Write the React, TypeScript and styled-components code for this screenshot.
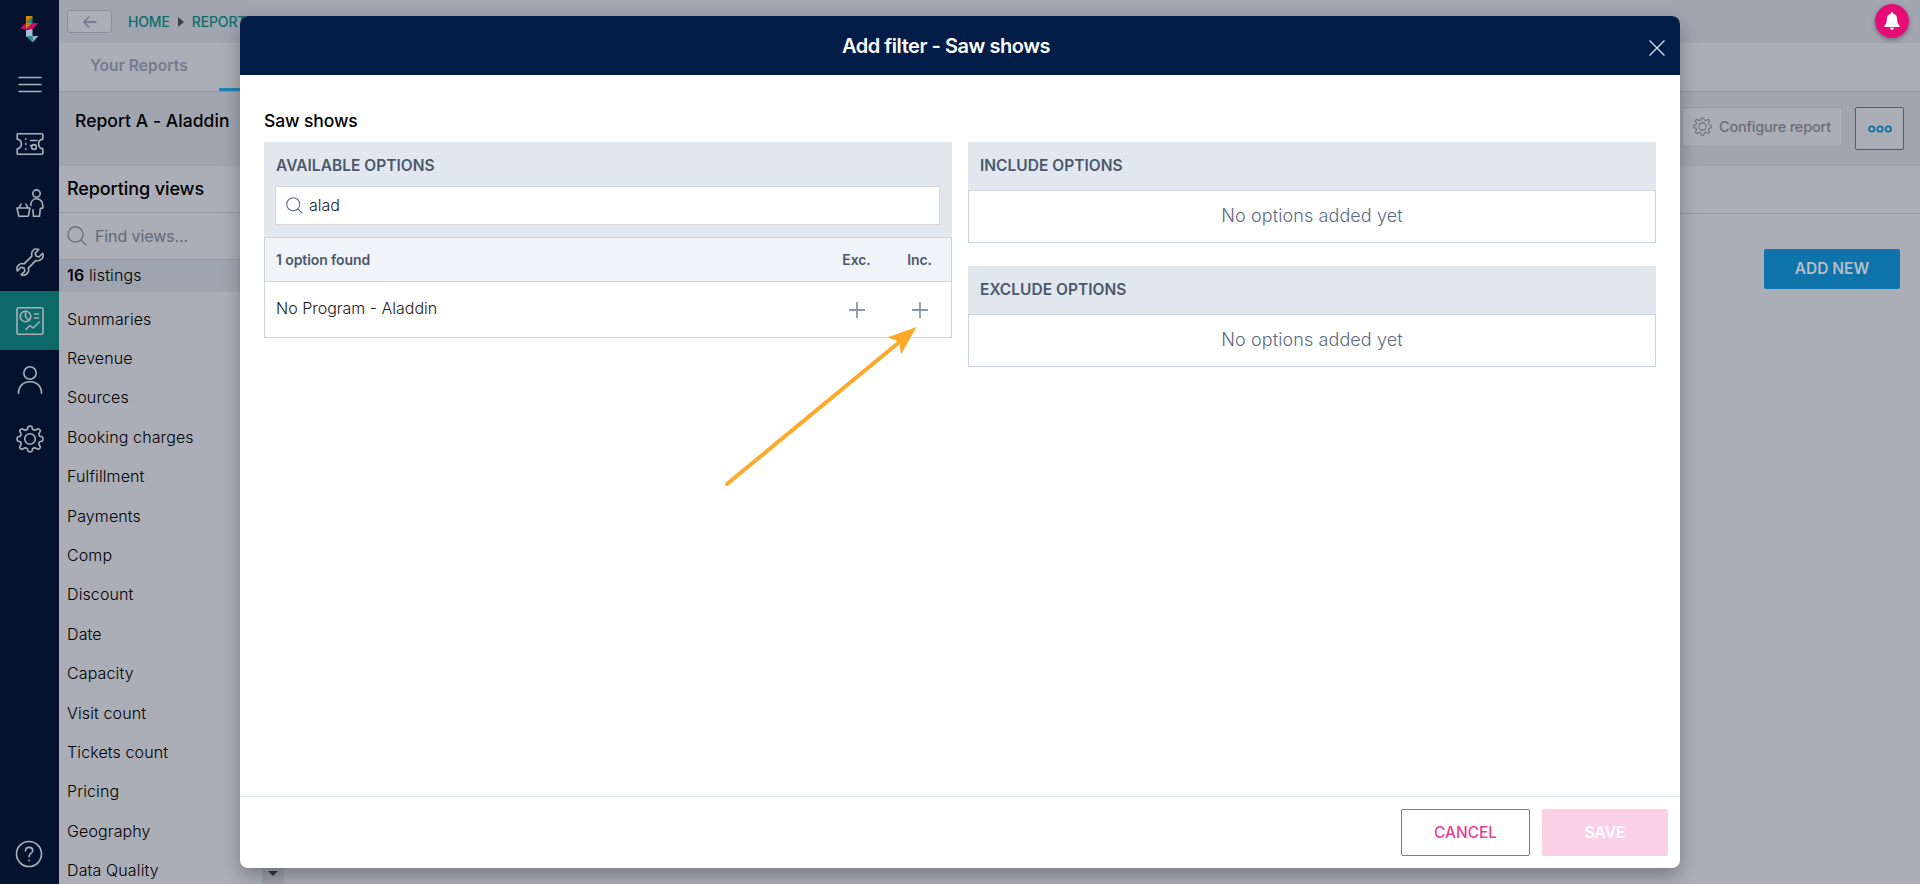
import type { ReactNode } from 'react';
import styled, { createGlobalStyle } from 'styled-components';

const views = [
  'Summaries',
  'Revenue',
  'Sources',
  'Booking charges',
  'Fulfillment',
  'Payments',
  'Comp',
  'Discount',
  'Date',
  'Capacity',
  'Visit count',
  'Tickets count',
  'Pricing',
  'Geography',
  'Data Quality',
];

const GEAR =
  'M12.1 1.6Q14 .4 15.9 1.6L16.6 4.2Q17.8 5.5 19.6 5L22.1 3.7Q24 4 24.4 5.9L23 8.5Q22.6 10.2 23.9 11.3L26.4 12.1Q27.6 14 26.4 15.9L23.9 16.7Q22.6 17.8 23 19.5L24.4 22.1Q24 24 22.1 24.4L19.6 23Q17.8 22.5 16.6 23.8L15.9 26.4Q14 27.6 12.1 26.4L11.4 23.8Q10.2 22.5 8.4 23L5.9 24.4Q4 24 3.6 22.1L5 19.5Q5.4 17.8 4.1 16.7L1.6 15.9Q.4 14 1.6 12.1L4.1 11.3Q5.4 10.2 5 8.5L3.6 5.9Q4 4 5.9 3.7L8.4 5Q10.2 5.5 11.4 4.2z';

const Icon = ({ size = 28, children }: { size?: number; children: ReactNode }) => (
  <svg
    width={size}
    height={size}
    viewBox="0 0 28 28"
    fill="none"
    stroke="currentColor"
    strokeWidth="1.6"
    strokeLinecap="round"
    strokeLinejoin="round"
  >
    {children}
  </svg>
);

const GearIcon = ({ size }: { size?: number }) => (
  <Icon size={size}>
    <path d={GEAR} />
    <circle cx="14" cy="14" r="5.3" />
  </Icon>
);

const SearchIcon = ({ size }: { size: number }) => (
  <svg width={size} height={size} viewBox="0 0 20 20" fill="none" stroke="currentColor" strokeWidth="1.2">
    <circle cx="8.5" cy="8.5" r="7.6" />
    <path d="M13.9 13.9l5.4 5.4" />
  </svg>
);

const PlusIcon = () => (
  <svg width="16" height="16" viewBox="0 0 16 16">
    <path d="M8 0v16M0 8h16" stroke="#8d96ab" strokeWidth="1.8" />
  </svg>
);

const Logo = () => (
  <svg width="19" height="27" viewBox="0 0 19 27">
    <path d="M6 0h6.5L6 6z" fill="#cf8a10" />
    <path d="M6 6l6.5-6v1.5L7 7H6z" fill="#b3921c" />
    <path d="M12.5 1.5V7H7z" fill="#1c8f82" />
    <path d="M0 12l6-5v7z" fill="#c40c6a" />
    <path d="M6 7h12.5l-6 6H6z" fill="#c40c6a" />
    <path d="M6 7h6L6 13z" fill="#cf8210" />
    <path d="M6 14l6.5-1v8H6z" fill="#a6bfd4" />
    <path d="M6 20h6.5v6.5z" fill="#1c9486" />
    <path d="M12.5 20h6l-6 6.500z" fill="#8fb5c8" />
  </svg>
);

const App = () => {
  return (
    <>
      <GlobalStyle />
      <Page>
        <Sidebar>
          <LogoTile>
            <Logo />
          </LogoTile>
          <NavTile>
            <Icon>
              <path d="M3 6.5h22M3 13.5h22M3 20.5h22" />
            </Icon>
          </NavTile>
          <NavTile>
            <Icon>
              <path d="M2.2 3.8h23.6c.6 0 1 .4 1 1v4.3c-5.6 1-5.6 8.8 0 9.8v4.3c0 .6-.4 1-1 1H2.2c-.6 0-1-.4-1-1v-4.3c5.6-1 5.6-8.8 0-9.800V4.800c0-.6.4-1 1-1z" />
              <path d="M9.800 8.700v.5M9.800 13.500v1M9.800 18.800v.5M14.500 10.500h6.500M14.500 15.500h.5" />
              <circle cx="18" cy="17" r="2.4" />
            </Icon>
          </NavTile>
          <NavTile>
            <Icon>
              <circle cx="20.5" cy="4.6" r="3.7" />
              <path d="M14.8 16.5c0-4 2.2-6.7 5.7-6.7s6.3 2.7 6.3 6.700v2.800h-2.500l-.8 8h-6l-.6-6.500" />
              <path d="M1 19h13l-1.600 7.500c-.1.500-.5.800-1 .8H3.600c-.5 0-.9-.3-1-.8zM5 15l-2 4M10 15l2 4" />
            </Icon>
          </NavTile>
          <NavTile>
            <Icon>
              <path d="M18 1.300c2-.6 3.600-.4 4.800.2l-3.600 3.600.8 3 3 .8 3.700-3.700c.8 2 .3 4.500-1.200 6-1.500 1.400-3.600 1.800-5.500 1.200l-7.700 7.700c.7 2 .3 4-1.200 5.500-1.500 1.500-4 2-5.900 1.200l3.700-3.700-.8-3-3-.8-3.700 3.700c-.8-2-.3-4.400 1.200-5.900 1.500-1.500 3.600-1.900 5.500-1.200l7.800-7.800c-.6-2.600.1-5.500 2.100-6.800z" />
            </Icon>
          </NavTile>
          <NavTile $active>
            <Icon>
              <rect x="1" y="0.8" width="26" height="26.4" rx="1.5" />
              <circle cx="9.5" cy="9.5" r="5.3" />
              <path d="M9.5 4.200v5.300l3.600 4M18.500 7h4M18.500 11h4M10 22.500l4-4 3 2.500 6.500-6" />
            </Icon>
          </NavTile>
          <NavTile>
            <Icon>
              <circle cx="14" cy="7" r="6.2" />
              <path d="M2.500 27.200c0-7 4.800-11.400 11.500-11.400s11.500 4.400 11.500 11.400" />
            </Icon>
          </NavTile>
          <NavTile>
            <GearIcon />
          </NavTile>
          <HelpTile>
            <Icon>
              <circle cx="14" cy="14" r="12.5" />
              <path d="M10.500 11c0-2.200 1.500-3.600 3.600-3.600s3.600 1.300 3.600 3.300c0 2.500-3.600 2.700-3.600 5.300v.8M14.100 20.300v.4" />
            </Icon>
          </HelpTile>
        </Sidebar>

        <Main>
          <TopBar>
            <BackButton>
              <svg width="14" height="12" viewBox="0 0 14 12" fill="none" stroke="currentColor" strokeWidth="1.3">
                <path d="M6 .7L.9 6 6 11.300M.9 6H13.500" />
              </svg>
            </BackButton>
            <Crumb>HOME</Crumb>
            <CrumbArrow />
            <Crumb>REPORTS</Crumb>
          </TopBar>
          <Tabs>
            <Tab>Your Reports</Tab>
            <ActiveTab />
          </Tabs>
          <ReportBar>
            <ReportName>Report A - Aladdin</ReportName>
            <ConfigureButton>
              <GearIcon size={19} />
              Configure report
            </ConfigureButton>
            <MoreButton>
              <svg width="24" height="8" viewBox="0 0 24 8" fill="none" stroke="currentColor" strokeWidth="1.8">
                <circle cx="3.7" cy="4" r="2.7" />
                <circle cx="12" cy="4" r="2.7" />
                <circle cx="20.3" cy="4" r="2.7" />
              </svg>
            </MoreButton>
          </ReportBar>
          <Columns>
            <ViewsPanel>
              <ViewsTitle>Reporting views</ViewsTitle>
              <FindViews>
                <SearchIcon size={20} />
                Find views...
              </FindViews>
              <Listings>
                <b>16</b> listings
              </Listings>
              <ViewList>
                {views.map((view) => (
                  <ViewItem key={view}>{view}</ViewItem>
                ))}
              </ViewList>
              <ScrollButton>
                <svg width="10" height="5" viewBox="0 0 10 5">
                  <path d="M0 0h10L5 5z" fill="#30343c" />
                </svg>
              </ScrollButton>
            </ViewsPanel>
            <Content>
              <ContentHead />
              <AddNew>ADD NEW</AddNew>
            </Content>
          </Columns>
        </Main>
      </Page>

      <Modal>
        <ModalHeader>
          <ModalTitle>Add filter - Saw shows</ModalTitle>
          <CloseButton>
            <svg width="16" height="16" viewBox="0 0 16 16" stroke="#e3e7ee" strokeWidth="1.2">
              <path d="M.5.5l15 15M15.5.5l-15 15" />
            </svg>
          </CloseButton>
        </ModalHeader>
        <ModalBody>
          <SectionTitle>Saw shows</SectionTitle>
          <Panels>
            <div>
              <AvailableHead>
                <PanelTitle>AVAILABLE OPTIONS</PanelTitle>
                <SearchBox>
                  <SearchIcon size={17} />
                  alad
                </SearchBox>
              </AvailableHead>
              <ResultHead>
                <span>1 option found</span>
                <Cell>Exc.</Cell>
                <Cell>Inc.</Cell>
              </ResultHead>
              <ResultRow>
                <ResultName>No Program - Aladdin</ResultName>
                <Cell>
                  <PlusIcon />
                </Cell>
                <Cell>
                  <PlusIcon />
                </Cell>
              </ResultRow>
            </div>
            <SelectedPanels>
              {['INCLUDE OPTIONS', 'EXCLUDE OPTIONS'].map((title) => (
                <div key={title}>
                  <SelectedHead>
                    <PanelTitle>{title}</PanelTitle>
                  </SelectedHead>
                  <EmptyBox>No options added yet</EmptyBox>
                </div>
              ))}
            </SelectedPanels>
          </Panels>
        </ModalBody>
        <ModalFooter>
          <CancelButton>CANCEL</CancelButton>
          <SaveButton>SAVE</SaveButton>
        </ModalFooter>
      </Modal>

      <Arrow width="200" height="170" viewBox="0 0 200 170">
        <path d="M7 164L180 21.500" stroke="#fda929" strokeWidth="4" strokeLinecap="round" />
        <path d="M196.500 7l-15.500 27.500-1.500-10.500-3.500-3.500L167 17.500z" fill="#fda929" />
      </Arrow>

      <Bell>
        <svg width="16" height="18" viewBox="0 0 16 18" fill="#fff">
          <path d="M8 0c.7 0 1.200.5 1.200 1.200v.5c2.500.6 4 2.600 4 5.300 0 4 1 5.400 2.300 6.500.5.500.2 1.500-.6 1.500H1.100c-.8 0-1.100-1-.6-1.500C1.800 12.400 2.800 11 2.800 7c0-2.700 1.500-4.700 4-5.300v-.5C6.800.5 7.300 0 8 0zM6 15.700h4a2 2 0 0 1-4 0z" />
        </svg>
      </Bell>
    </>
  );
};
export default App;

const GlobalStyle = createGlobalStyle`
  * {
    box-sizing: border-box;
  }
  body {
    margin: 0;
    overflow: hidden;
    font-family: Inter, 'Liberation Sans', sans-serif;
    font-size: 16px;
    background: #abaeb6;
  }
  button {
    font-family: inherit;
    padding: 0;
  }
  svg {
    display: block;
    flex: none;
  }
`;

const Page = styled.div`
  display: flex;
  height: 884px;
  overflow: hidden;
`;

const Sidebar = styled.nav`
  display: flex;
  flex-direction: column;
  width: 59px;
  flex: none;
  background: #04122e;
  color: #abb0bb;
`;

const NavTile = styled.div<{ $active?: boolean }>`
  display: flex;
  align-items: center;
  justify-content: center;
  height: 59px;
  background: ${({ $active }) => ($active ? '#0d6868' : 'transparent')};
`;

const LogoTile = styled(NavTile)`
  height: 55px;
  padding-top: 4px;
`;

const HelpTile = styled(NavTile)`
  margin: auto 0 1px;
  padding-right: 1px;
`;

const Main = styled.div`
  display: flex;
  flex-direction: column;
  flex: 1;
`;

const TopBar = styled.div`
  display: flex;
  flex: none;
  align-items: center;
  height: 43px;
  padding-left: 8px;
  background: #a1a5b0;
`;

const BackButton = styled.button`
  display: flex;
  align-items: center;
  justify-content: center;
  width: 45px;
  height: 23px;
  margin-right: 16px;
  background: #abaeb6;
  border: 1px solid #8890a0;
  border-radius: 3px;
  color: #6a7385;
`;

const Crumb = styled.span`
  font-size: 14px;
  font-weight: 500;
  letter-spacing: -0.15px;
  color: #0f6d69;
`;

const CrumbArrow = styled.span`
  margin: 0 8px;
  border: 5px solid transparent;
  border-left: 6px solid #39414f;
  border-right: 0;
`;

const Tabs = styled.div`
  display: flex;
  flex: none;
  height: 49px;
  border-bottom: 1px solid #8f96a5;
`;

const Tab = styled.div`
  width: 160px;
  padding: 13px 0 0 31px;
  font-weight: 600;
  font-size: 15.5px;
  letter-spacing: 0.07px;
  color: #727b8e;
`;

const ActiveTab = styled.div`
  width: 180px;
  border-bottom: 3px solid #2283b4;
`;

const ReportBar = styled.div`
  display: flex;
  flex: none;
  align-items: flex-start;
  height: 74px;
  padding: 15px 16px 0 16px;
  background: #a0a5b0;
`;

const ReportName = styled.h1`
  margin: 3px auto 0 0;
  font-size: 17.5px;
  line-height: 22px;
  font-weight: 500;
  letter-spacing: 0.05px;
  color: #000;
`;

const ConfigureButton = styled.button`
  display: flex;
  align-items: center;
  gap: 7px;
  width: 161px;
  height: 40px;
  margin-right: 12px;
  padding: 0 0 1px 10px;
  background: #abaeb6;
  border: 1px solid #999ca7;
  border-radius: 3px;
  font-size: 14.5px;
  font-weight: 500;
  letter-spacing: -0.2px;
  white-space: nowrap;
  color: #686d78;
`;

const MoreButton = styled.button`
  display: flex;
  align-items: center;
  justify-content: center;
  width: 49px;
  height: 43px;
  background: #abaeb6;
  border: 1px solid #0f74a9;
  border-radius: 2px;
  color: #0f74a9;
`;

const Columns = styled.div`
  display: flex;
  flex: 1;
  min-height: 0;
`;

const ViewsPanel = styled.div`
  position: relative;
  width: 226px;
  overflow: hidden;
  background: #abaeb6;
`;

const ViewsTitle = styled.h2`
  height: 47px;
  margin: 0;
  padding: 12px 8px;
  border-bottom: 1px solid #9198a7;
  font-size: 18px;
  line-height: 22px;
  font-weight: 500;
  letter-spacing: -0.1px;
`;

const FindViews = styled.div`
  display: flex;
  align-items: center;
  gap: 8px;
  height: 47px;
  padding: 0 0 1px 8px;
  border-bottom: 1px solid #9198a7;
  letter-spacing: -0.1px;
  color: #5f6879;
`;

const Listings = styled.div`
  height: 32px;
  padding-left: 8px;
  line-height: 31px;
  background: #9fa5b0;
  letter-spacing: 0.15px;
  font-weight: 300;

  b {
    font-weight: 600;
  }
`;

const ViewList = styled.ul`
  margin: 0;
  padding: 7.600px 0 0 8px;
  list-style: none;
`;

const ViewItem = styled.li`
  height: 39.4px;
  line-height: 39.4px;
  font-weight: 300;
  letter-spacing: 0.12px;
  color: #000;
`;

/* lower end of the list scrollbar */
const ScrollButton = styled.div`
  position: absolute;
  right: 1px;
  bottom: 0;
  display: flex;
  justify-content: center;
  width: 22px;
  height: 20px;
  padding-top: 7px;
  background: #a0a1a7;
`;

const Content = styled.div`
  display: flex;
  flex-direction: column;
  flex: 1;
`;

const ContentHead = styled.div`
  height: 48px;
  border-bottom: 1px solid #9198a7;
`;

const AddNew = styled.button`
  align-self: flex-end;
  width: 136px;
  height: 40px;
  margin: 35px 20px 0 0;
  padding-bottom: 1px;
  border: 0;
  border-radius: 2px;
  background: #0f74a9;
  color: #b6bdc8;
  font-size: 15.5px;
  font-weight: 600;
`;

const Modal = styled.div`
  position: absolute;
  top: 16px;
  left: 240px;
  display: flex;
  flex-direction: column;
  width: 1440px;
  height: 852px;
  overflow: hidden;
  border-radius: 8px;
  background: #fff;
  box-shadow: 0 8px 18px rgba(0, 0, 0, 0.28);
`;

const ModalHeader = styled.div`
  display: grid;
  grid-template-columns: 1fr 47px;
  align-items: center;
  height: 59px;
  background: #041c48;
`;

const ModalTitle = styled.h2`
  margin: 0;
  padding-left: 19px;
  text-align: center;
  font-size: 20px;
  font-weight: 600;
  letter-spacing: -0.45px;
  color: #fff;
`;

const CloseButton = styled.button`
  margin-top: 5px;
  padding-left: 16px;
  border: 0;
  background: none;
`;

const ModalBody = styled.div`
  flex: 1;
  padding: 35px 24px;
`;

const SectionTitle = styled.h3`
  margin: 0 0 10px;
  font-size: 17.5px;
  line-height: 22px;
  font-weight: 500;
  letter-spacing: -0.1px;
`;

const Panels = styled.div`
  display: grid;
  grid-template-columns: 1fr 1fr;
  gap: 16px;
`;

const AvailableHead = styled.div`
  height: 95px;
  padding: 12px 12px 12px 11px;
  background: #e1e7ef;
`;

const PanelTitle = styled.div`
  padding-left: 1px;
  font-size: 15.5px;
  line-height: 24px;
  font-weight: 600;
  letter-spacing: 0.02px;
  color: #4b586c;
`;

const SearchBox = styled.div`
  display: flex;
  align-items: center;
  gap: 6px;
  height: 39px;
  margin-top: 8px;
  padding: 0 0 1px 10px;
  border: 1px solid #d5d7da;
  background: #fff;
  font-weight: 300;
  color: #191c20;

  svg {
    color: #55617a;
  }
`;

const ResultHead = styled.div`
  display: grid;
  grid-template-columns: 1fr 63px 63px;
  align-items: center;
  height: 44px;
  padding: 0 0 0 11px;
  border: 1px solid #cad3e2;
  border-bottom: 0;
  background: #f0f4f9;
  font-size: 14px;
  font-weight: 600;
  letter-spacing: -0.1px;
  color: #4b586c;
`;

const ResultRow = styled(ResultHead)`
  height: 57px;
  border-bottom: 1px solid #cad3e2;
  background: #fff;
  font-size: 16px;
  font-weight: 300;
  letter-spacing: 0;
  color: #191c20;
`;

const ResultName = styled.span`
  padding-bottom: 3px;
`;

const Cell = styled.div`
  display: flex;
  justify-content: center;
`;

const SelectedPanels = styled.div`
  display: flex;
  flex-direction: column;
  gap: 23px;
`;

const SelectedHead = styled.div`
  height: 48px;
  padding: 12px 11px;
  background: #e1e7ef;
`;

const EmptyBox = styled.div`
  height: 53px;
  border: 1px solid #cad3e2;
  line-height: 50px;
  text-align: center;
  font-size: 18px;
  font-weight: 300;
  letter-spacing: 0.1px;
  color: #5c6a85;
`;

const ModalFooter = styled.div`
  display: flex;
  justify-content: flex-end;
  gap: 12px;
  height: 72px;
  padding: 12px 12px 0;
  border-top: 1px solid #e2e7ef;
`;

const CancelButton = styled.button`
  width: 129px;
  height: 47px;
  border: 1px solid #ea3f94;
  border-radius: 2px;
  background: #fff;
  color: #ea3f94;
  font-size: 15.5px;
  font-weight: 500;
`;

const SaveButton = styled(CancelButton)`
  width: 126px;
  border-color: #fad0e6;
  background: #fad0e6;
  color: #fff;
  font-weight: 600;
`;

const Arrow = styled.svg`
  position: absolute;
  top: 320px;
  left: 720px;
`;

const Bell = styled.div`
  position: absolute;
  top: 4px;
  left: 1875px;
  display: flex;
  align-items: center;
  justify-content: center;
  width: 34px;
  height: 34px;
  border-radius: 50%;
  background: #e60e76;
  box-shadow: 0 2px 4px rgba(0, 0, 0, 0.35);
`;
